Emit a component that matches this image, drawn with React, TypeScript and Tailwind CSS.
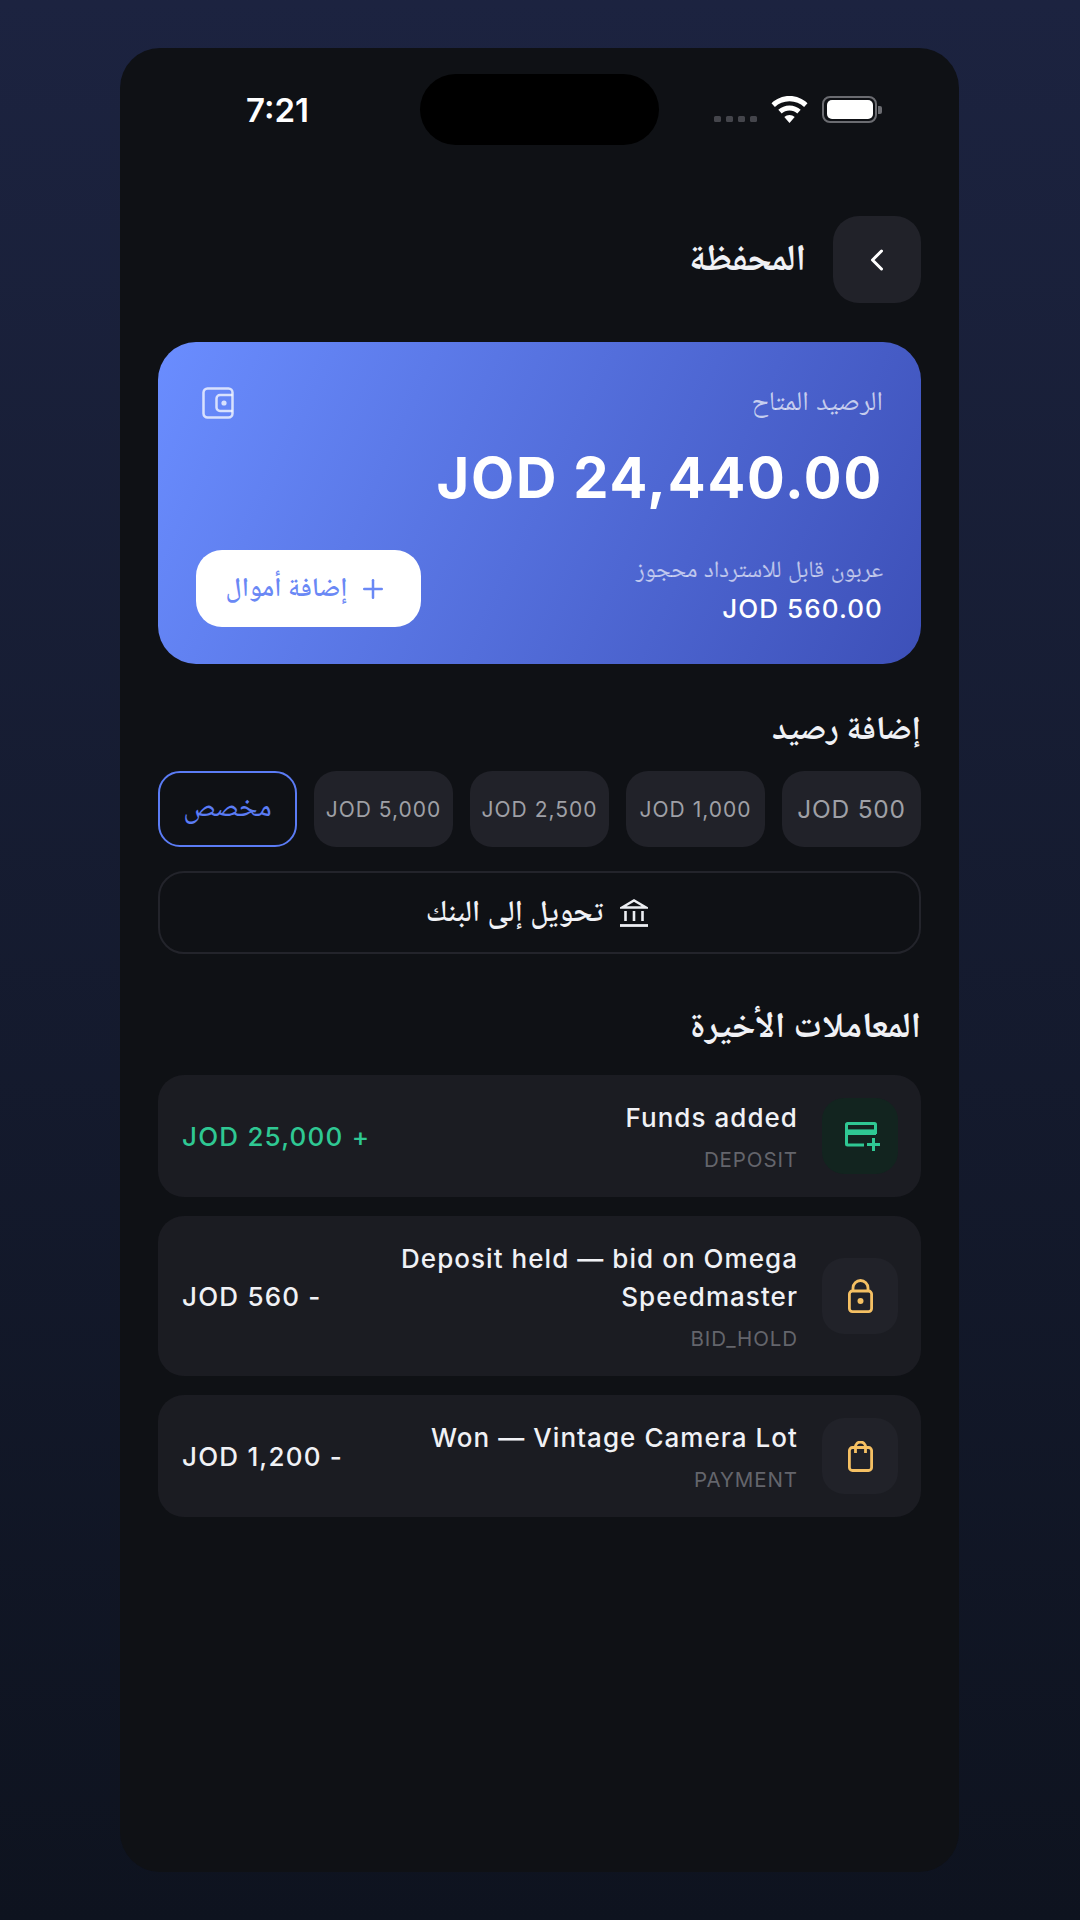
import React from "react";
import { ChevronLeft, Plus } from "lucide-react";

const WalletIcon = () => (
  <svg width="32" height="32" viewBox="0 0 32 32" fill="none" stroke="currentColor" strokeWidth="2.5" className="ml-[6px] text-white/75">
    <rect x="1.5" y="1.5" width="29" height="29" rx="4" />
    <path d="M30.5 8H18a3.5 3.5 0 0 0-3.5 3.5v9A3.5 3.5 0 0 0 18 24h12.5" />
    <circle cx="22" cy="16" r="2.6" fill="currentColor" stroke="none" />
  </svg>
);

const BankIcon = () => (
  <svg width="28" height="28" viewBox="0 0 28 28" fill="none" stroke="currentColor" strokeWidth="2.4" className="text-[#eceef2]">
    <path d="M2 8.5 14 1.5l12 7z" />
    <path d="M5.5 12v10M14 12v10M22.5 12v10" strokeWidth="2.6" />
    <path d="M0 26.5h28" strokeWidth="2.8" />
  </svg>
);

const CardPlusIcon = () => (
  <svg width="35" height="29" viewBox="0 0 35 29" fill="none" stroke="currentColor" strokeWidth="3" className="ml-[4px] text-[#2fc893]">
    <path d="M19 23H2.5a1 1 0 0 1-1-1V2.5a1 1 0 0 1 1-1h27a1 1 0 0 1 1 1V12" />
    <path d="M1 10.2h30" strokeWidth="5.6" />
    <path d="M22 22.5h13M28.5 16v13" />
  </svg>
);

const LockIcon = () => (
  <svg width="25" height="34" viewBox="0 0 25 34" fill="none" stroke="currentColor" strokeWidth="2.8" className="text-[#f5c063]">
    <rect x="1.4" y="12" width="22.2" height="20.6" rx="3" />
    <path d="M5 12V9a7.5 7.5 0 0 1 15 0v3" />
    <circle cx="12.5" cy="22" r="3" fill="currentColor" stroke="none" />
  </svg>
);

const BagIcon = () => (
  <svg width="25" height="31" viewBox="0 0 25 31" fill="none" stroke="currentColor" strokeWidth="2.8" className="text-[#f5c063]">
    <rect x="1.4" y="6.5" width="22.2" height="23" rx="3" />
    <path d="M7.5 12V6a5 5 0 0 1 10 0v6" />
  </svg>
);

const chips = ["JOD 1,000", "JOD 2,500", "JOD 5,000"];

const Row = ({ icon, iconBg, title, sub, amount, amountColor, h }: { icon: React.ReactNode; iconBg: string; title: React.ReactNode; sub: string; amount: string; amountColor: string; h: string }) => (
  <div className={`flex items-center gap-[24px] rounded-[26px] bg-[#1b1c22] pr-[23px] pl-6 ${h}`}>
    <div className={`flex h-[76px] w-[76px] shrink-0 items-center justify-center rounded-[22px] ${iconBg}`}>{icon}</div>
    <div className="flex min-w-0 flex-1 flex-col">
      <div className="text-[26px] leading-[38px] font-medium tracking-[1.05px] text-[#f0f1f5]">{title}</div>
      <div className="mt-[9px] text-[20.5px] leading-[28px] tracking-[0.9px] text-[#64656c]">{sub}</div>
    </div>
    <div className={`shrink-0 text-[26px] font-medium tracking-[1.2px] ${amountColor}`}>{amount}</div>
  </div>
);

export default function App() {
  return (
    <div className="flex min-h-[1920px] items-center justify-center bg-gradient-to-b from-[#1c2340] to-[#0e131f] font-['Inter','Noto_Naskh_Arabic','Amiri','Scheherazade_New','DejaVu_Sans',sans-serif]">
      <div dir="rtl" className="relative mr-[1px] flex h-[1824px] w-[839px] flex-col overflow-hidden rounded-[40px] bg-[#0f1115]">
        <div dir="ltr" className="flex h-[128px] shrink-0 items-start justify-between pt-[42px] pr-[77px] pl-[126px]">
          <span className="text-[33px] leading-[40px] font-semibold text-white">7:21</span>
          <div className="mt-[6px] flex items-end gap-[14px]">
            <div className="mb-[1px] flex gap-[5px]">
              {[0, 1, 2, 3].map((i) => (
                <span key={i} className="h-[6px] w-[7px] rounded-[1.5px] bg-[#44454b]" />
              ))}
            </div>
            <svg width="37" height="27" viewBox="0 0 37 27" fill="white" className="block">
              <path d="M18.5 0C11.5 0 5.2 2.7.5 7.2l3.4 3.8C7.7 7.5 12.8 5.3 18.5 5.3s10.8 2.2 14.6 5.7l3.4-3.8C31.8 2.7 25.5 0 18.5 0z" />
              <path d="M18.5 9.5c-4.3 0-8.2 1.6-11.2 4.3l3.4 3.8c2-1.8 4.8-3 7.8-3s5.8 1.2 7.8 3l3.4-3.8c-3-2.7-6.9-4.3-11.2-4.3z" />
              <path d="M18.5 19c-2 0-3.8.7-5.2 2l5.2 6 5.2-6c-1.4-1.3-3.2-2-5.2-2z" />
            </svg>
            <div className="flex items-center">
              <div className="flex h-[27px] w-[55px] items-center justify-center rounded-[8px] border-[2.5px] border-[#6b6c71]">
                <div className="h-[19px] w-[46px] rounded-[5px] bg-white" />
              </div>
              <div className="ml-[1px] h-[8px] w-[4px] rounded-r-[2px] bg-[#6b6c71]" />
            </div>
          </div>
        </div>
        <div className="absolute top-[26px] left-[300px] h-[71px] w-[239px] rounded-[36px] bg-black" />

        <div className="flex flex-1 flex-col px-[38px] pt-[40px]">
          <div className="flex items-center gap-[27px]">
            <button className="flex h-[87px] w-[88px] items-center justify-center rounded-[26px] bg-[#212229] text-white">
              <ChevronLeft size={36} strokeWidth={2} />
            </button>
            <h1 className="pb-[6px] text-[37px] leading-[40px] font-bold text-[#f0f1f5]">المحفظة</h1>
          </div>

          <div className="mt-[39px] flex h-[322px] flex-col rounded-[38px] bg-[linear-gradient(115deg,#6a8dff,#3d50b8)] px-[38px] pt-[44px]">
            <div className="flex items-center justify-between">
              <span className="pb-[4px] text-[27px] leading-[30px] text-white/70">الرصيد المتاح</span>
              <WalletIcon />
            </div>
            <div className="mt-[24px] text-[56px] leading-[68px] font-bold tracking-[1.8px] text-white">JOD 24,440.00</div>
            <div className="mt-[38px] flex items-end justify-between">
              <div>
                <div className="pb-[2px] text-[23.4px] leading-[28px] text-white/65">عربون قابل للاسترداد محجوز</div>
                <div className="mt-[6px] text-[26px] leading-[36px] font-medium tracking-[1.1px] text-white">JOD 560.00</div>
              </div>
              <button className="flex h-[77px] w-[225px] items-center justify-center gap-[11px] rounded-[26px] bg-white ps-[3px] text-[26.7px] font-semibold text-[#6a88f5]">
                <Plus size={30} strokeWidth={2} />
                <span className="mb-[4px]">إضافة أموال</span>
              </button>
            </div>
          </div>

          <h2 className="mt-[45px] pb-[2px] text-[33px] leading-[36px] font-bold text-[#f0f1f5]">إضافة رصيد</h2>
          <div className="mt-[24px] flex gap-[17px]">
            <div className="flex h-[76px] w-[139px] items-center justify-center rounded-[22px] bg-[#212229] text-[24.5px] tracking-[0.8px] text-[#9fa0a6]">JOD 500</div>
            {chips.map((c) => (
              <div key={c} className="flex h-[76px] w-[139px] items-center justify-center rounded-[22px] bg-[#212229] pt-[1px] text-[21px] tracking-[1px] text-[#9fa0a6]">
                {c}
              </div>
            ))}
            <div className="flex h-[76px] w-[139px] items-center justify-center rounded-[22px] border-2 border-[#5b7cf5] pb-[7px] text-[29.5px] text-[#5b7cf5]">مخصص</div>
          </div>
          <button className="mt-[24px] flex h-[83px] items-center justify-center gap-[17px] rounded-[26px] border-2 border-[#23242b] ps-[5px] text-[30px] font-semibold text-[#f0f1f5]">
            <BankIcon />
            <span className="mb-[4px]">تحويل إلى البنك</span>
          </button>

          <h2 className="mt-[50px] pb-[2px] text-[35.8px] leading-[40px] font-bold text-[#f0f1f5]">المعاملات الأخيرة</h2>
          <div className="mt-[29px] flex flex-col gap-[19px]">
            <Row h="h-[122px]" icon={<CardPlusIcon />} iconBg="bg-[#12241f]" title="Funds added" sub="DEPOSIT" amount="+ JOD 25,000" amountColor="text-[#2fc893]" />
            <Row h="h-[160px]" icon={<LockIcon />} iconBg="bg-[#212229]" title="Deposit held — bid on Omega Speedmaster" sub="BID_HOLD" amount="- JOD 560" amountColor="text-[#f0f1f5]" />
            <Row h="h-[122px]" icon={<BagIcon />} iconBg="bg-[#212229]" title="Won — Vintage Camera Lot" sub="PAYMENT" amount="- JOD 1,200" amountColor="text-[#f0f1f5]" />
          </div>
        </div>
      </div>
    </div>
  );
}
